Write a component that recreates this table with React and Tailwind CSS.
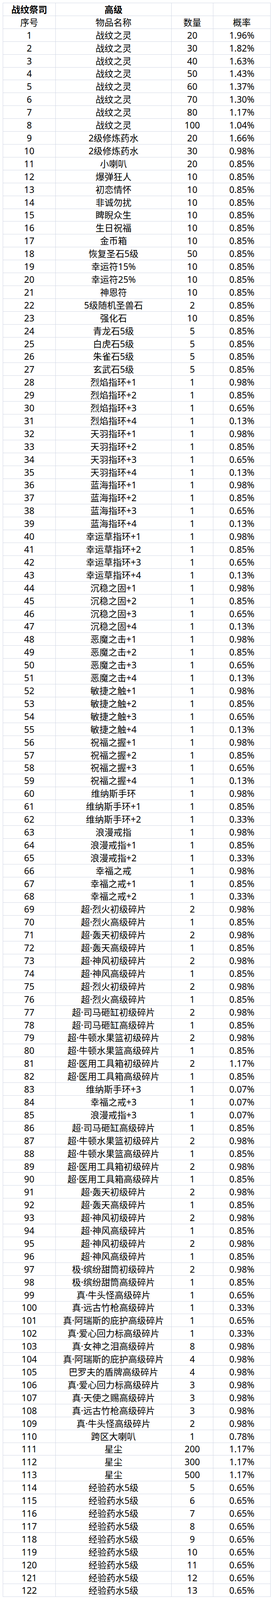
import React from "react";

const rows = [
  ["战纹之灵", 20, "1.96%"],
  ["战纹之灵", 30, "1.82%"],
  ["战纹之灵", 40, "1.63%"],
  ["战纹之灵", 50, "1.43%"],
  ["战纹之灵", 60, "1.37%"],
  ["战纹之灵", 70, "1.30%"],
  ["战纹之灵", 80, "1.17%"],
  ["战纹之灵", 100, "1.04%"],
  ["2级修炼药水", 20, "1.66%"],
  ["2级修炼药水", 30, "0.98%"],
  ["小喇叭", 20, "0.85%"],
  ["爆弹狂人", 10, "0.85%"],
  ["初恋情怀", 10, "0.85%"],
  ["非诚勿扰", 10, "0.85%"],
  ["睥睨众生", 10, "0.85%"],
  ["生日祝福", 10, "0.85%"],
  ["金币箱", 10, "0.85%"],
  ["恢复圣石5级", 50, "0.85%"],
  ["幸运符15%", 10, "0.85%"],
  ["幸运符25%", 10, "0.85%"],
  ["神恩符", 10, "0.85%"],
  ["5级随机圣兽石", 2, "0.85%"],
  ["强化石", 10, "0.85%"],
  ["青龙石5级", 5, "0.85%"],
  ["白虎石5级", 5, "0.85%"],
  ["朱雀石5级", 5, "0.85%"],
  ["玄武石5级", 5, "0.85%"],
];

// four-step rings / accessories share the same odds pattern
const ringOdds = ["0.98%", "0.85%", "0.65%", "0.13%"];
["烈焰指环", "天羽指环", "蓝海指环", "幸运草指环", "沉稳之固", "恶魔之击", "敏捷之触", "祝福之握"].forEach((name) => {
  ringOdds.forEach((p, i) => rows.push([`${name}+${i + 1}`, 1, p]));
});

["维纳斯手环", "浪漫戒指", "幸福之戒"].forEach((name) => {
  rows.push([name, 1, "0.98%"]);
  rows.push([`${name}+1`, 1, "0.85%"]);
  rows.push([`${name}+2`, 1, "0.33%"]);
});

const shard = (name) => {
  rows.push([`${name}初级碎片`, 2, "0.98%"]);
  rows.push([`${name}高级碎片`, 1, "0.85%"]);
};

["超·烈火", "超·轰天", "超·神风", "超·烈火", "超·司马砸缸", "超·牛顿水果篮"].forEach(shard);
rows.push(["超·医用工具箱初级碎片", 2, "1.17%"]);
rows.push(["超·医用工具箱高级碎片", 1, "0.85%"]);
rows.push(["维纳斯手环+3", 1, "0.07%"]);
rows.push(["幸福之戒+3", 1, "0.07%"]);
rows.push(["浪漫戒指+3", 1, "0.07%"]);
rows.push(["超·司马砸缸高级碎片", 1, "0.85%"]);
rows.push(["超·牛顿水果篮初级碎片", 2, "0.98%"]);
rows.push(["超·牛顿水果篮高级碎片", 1, "0.85%"]);
["超·医用工具箱", "超·轰天", "超·神风", "超·神风", "极·缤纷甜筒"].forEach(shard);

rows.push(
  ["真·牛头怪高级碎片", 1, "0.65%"],
  ["真·远古竹枪高级碎片", 1, "0.33%"],
  ["真·阿瑞斯的庇护高级碎片", 1, "0.65%"],
  ["真·爱心回力标高级碎片", 1, "0.33%"],
  ["真·女神之泪高级碎片", 8, "0.98%"],
  ["真·阿瑞斯的庇护高级碎片", 4, "0.98%"],
  ["巴罗夫的盾牌高级碎片", 4, "0.98%"],
  ["真·爱心回力标高级碎片", 3, "0.98%"],
  ["真·天使之赐高级碎片", 3, "0.98%"],
  ["真·远古竹枪高级碎片", 3, "0.98%"],
  ["真·牛头怪高级碎片", 2, "0.98%"],
  ["跨区大喇叭", 1, "0.78%"],
  ["星尘", 200, "1.17%"],
  ["星尘", 300, "1.17%"],
  ["星尘", 500, "1.17%"]
);

for (let q = 5; q <= 13; q++) rows.push(["经验药水5级", q, "0.65%"]);

const widths = ["w-[135px]", "w-[297px]", "w-[107px]", "w-[147px]"];

function Row({ cells, bold }) {
  return (
    <div className="flex h-[32.92px] border-b border-[#d3d9e6]">
      {cells.map((c, i) => (
        <div
          key={i}
          className={`flex items-center justify-center whitespace-nowrap border-r border-[#d3d9e6] ${widths[i]} ${
            bold && i < 2 ? "font-bold" : ""
          }`}
        >
          {c}
        </div>
      ))}
    </div>
  );
}

export default function App() {
  return (
    <div
      className="bg-white w-[700px] pt-[7px] pl-[7px] pb-[6px] text-black text-[23px] leading-[24px]"
      style={{ fontFamily: '"Noto Sans", "Noto Sans CJK SC", sans-serif' }}
    >
      <div className="w-[687px] border-t border-l border-[#d3d9e6]">
        <Row cells={["战纹祭司", "高级", "", ""]} bold />
        <Row cells={["序号", "物品名称", "数量", "概率"]} />
        {rows.map(([name, qty, rate], i) => (
          <Row key={i} cells={[i + 1, name, qty, rate]} />
        ))}
      </div>
    </div>
  );
}
